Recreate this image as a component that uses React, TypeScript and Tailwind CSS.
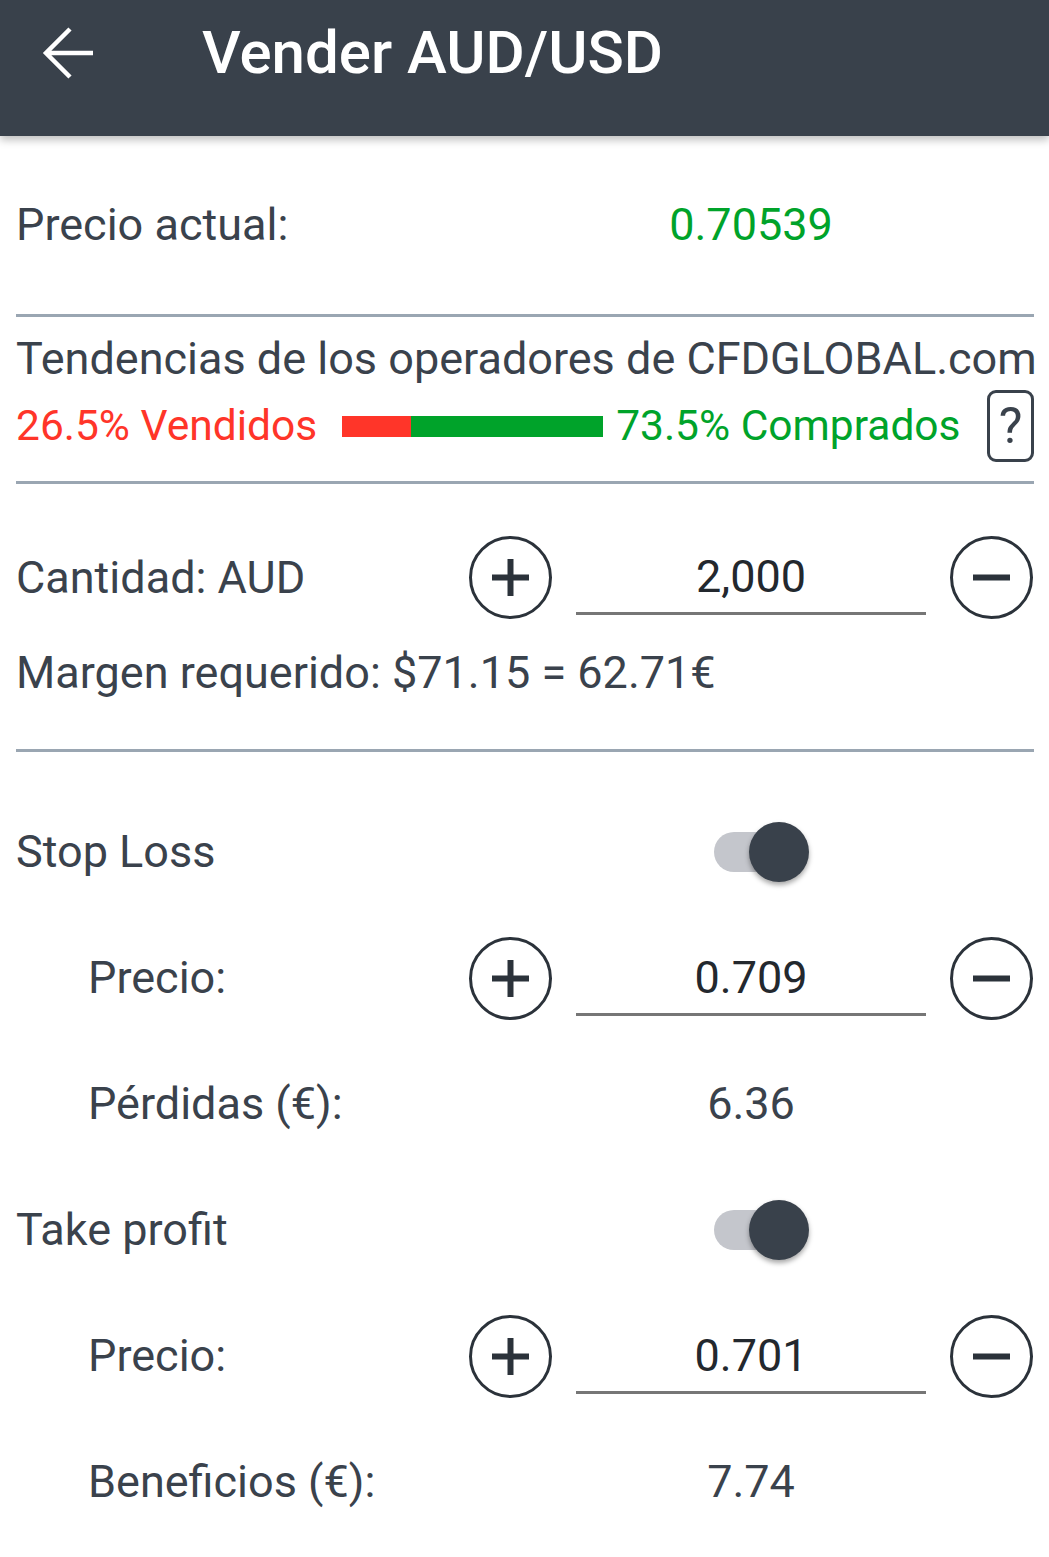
import React from 'react';

const ink = 'text-[#3a424c]';

function RoundButton({ kind }: { kind: 'plus' | 'minus' }) {
  return (
    <svg width="83" height="83" viewBox="0 0 83 83" className="shrink-0">
      <circle cx="41.5" cy="41.5" r="40" fill="none" stroke="#2b323a" strokeWidth="3" />
      <line x1="23" y1="41.5" x2="60" y2="41.5" stroke="#2b323a" strokeWidth="6" />
      {kind === 'plus' && <line x1="41.5" y1="23" x2="41.5" y2="60" stroke="#2b323a" strokeWidth="6" />}
    </svg>
  );
}

function Stepper({ label, value, indent }: { label: string; value: string; indent?: boolean }) {
  return (
    <div className="flex items-center">
      <div className={`w-[453px] ${indent ? 'pl-[72px]' : ''}`}>{label}</div>
      <RoundButton kind="plus" />
      <div className="ml-[24px] flex h-[79px] w-[350px] items-center justify-center self-start border-b-[3px] border-[#767676] pt-[6px] text-[#23282e]">
        {value}
      </div>
      <div className="ml-[24px]">
        <RoundButton kind="minus" />
      </div>
    </div>
  );
}

function Toggle() {
  return (
    <div className="relative ml-[698px] h-[60px] w-[95px] shrink-0">
      <div className="absolute left-0 top-[10px] h-[40px] w-[76px] rounded-full bg-[#c4c6cc]" />
      <div className="absolute left-[35px] top-0 h-[60px] w-[60px] rounded-full bg-[#39414b] shadow-[0_3px_5px_rgba(0,0,0,0.35)]" />
    </div>
  );
}

function ValueRow({ label, value }: { label: string; value: string }) {
  return (
    <div className="flex h-[126px] items-center">
      <div className="w-[560px] pl-[72px]">{label}</div>
      <div className="w-[350px] text-center">{value}</div>
    </div>
  );
}

export default function App() {
  return (
    <div className={`min-h-[1557px] w-[1049px] bg-white ${ink}`} style={{ fontFamily: 'Roboto, "Liberation Sans", sans-serif' }}>
      {/* Header */}
      <div className="relative h-[136px] bg-[#39414b] shadow-[0_4px_8px_rgba(0,0,0,0.25)]">
        <div className="flex h-[106px] items-center">
          <svg width="60" height="60" viewBox="0 0 60 60" className="ml-[39px]">
            <path d="M54 30H8M31 6L7 30l24 24" fill="none" stroke="#fff" strokeWidth="4.5" />
          </svg>
          <h1 className="ml-[103px] text-[60px] font-medium leading-none text-white">Vender AUD/USD</h1>
        </div>
      </div>

      <div className="pl-[16px] pr-[15px] text-[45px] leading-[54px]">
        {/* Precio actual */}
        <div className="flex h-[178px] items-center">
          <div className="w-[560px]">Precio actual:</div>
          <div className="w-[350px] text-center text-[#00a32a]">0.70539</div>
        </div>
        <div className="h-[3px] bg-[#9aa6b2]" />

        {/* Tendencias */}
        <div className="mt-[15px] whitespace-nowrap">Tendencias de los operadores de CFDGLOBAL.com</div>
        <div className="flex h-[80px] items-center whitespace-nowrap text-[42.5px]">
          <span className="text-[#ff3529]">26.5% Vendidos</span>
          <div className="ml-[25px] flex h-[21px] w-[261px] shrink-0">
            <div className="w-[69px] bg-[#ff3529]" />
            <div className="flex-1 bg-[#00a32a]" />
          </div>
          <span className="ml-[13px] text-[#00a32a]">73.5% Comprados</span>
          <div className="ml-auto flex h-[72px] w-[47px] shrink-0 items-center justify-center rounded-[9px] border-[3px] border-[#39414b] text-[50px]">?</div>
        </div>
        <div className="mt-[15px] h-[3px] bg-[#9aa6b2]" />

        {/* Cantidad */}
        <div className="mt-[52px]">
          <Stepper label="Cantidad: AUD" value="2,000" />
        </div>
        <div className="mt-[27px] h-[54px]">Margen requerido: $71.15 = 62.71€</div>
        <div className="mt-[49px] h-[3px] bg-[#9aa6b2]" />

        {/* Stop loss */}
        <div className="mt-[37px]">
          <div className="flex h-[126px] items-center">
            <div className="w-0 whitespace-nowrap">Stop Loss</div>
            <Toggle />
          </div>
          <div className="flex h-[126px] items-center">
            <div className="w-full">
              <Stepper label="Precio:" value="0.709" indent />
            </div>
          </div>
          <ValueRow label="Pérdidas (€):" value="6.36" />

          {/* Take profit */}
          <div className="flex h-[126px] items-center">
            <div className="w-0 whitespace-nowrap">Take profit</div>
            <Toggle />
          </div>
          <div className="flex h-[126px] items-center">
            <div className="w-full">
              <Stepper label="Precio:" value="0.701" indent />
            </div>
          </div>
          <ValueRow label="Beneficios (€):" value="7.74" />
        </div>
      </div>
    </div>
  );
}
